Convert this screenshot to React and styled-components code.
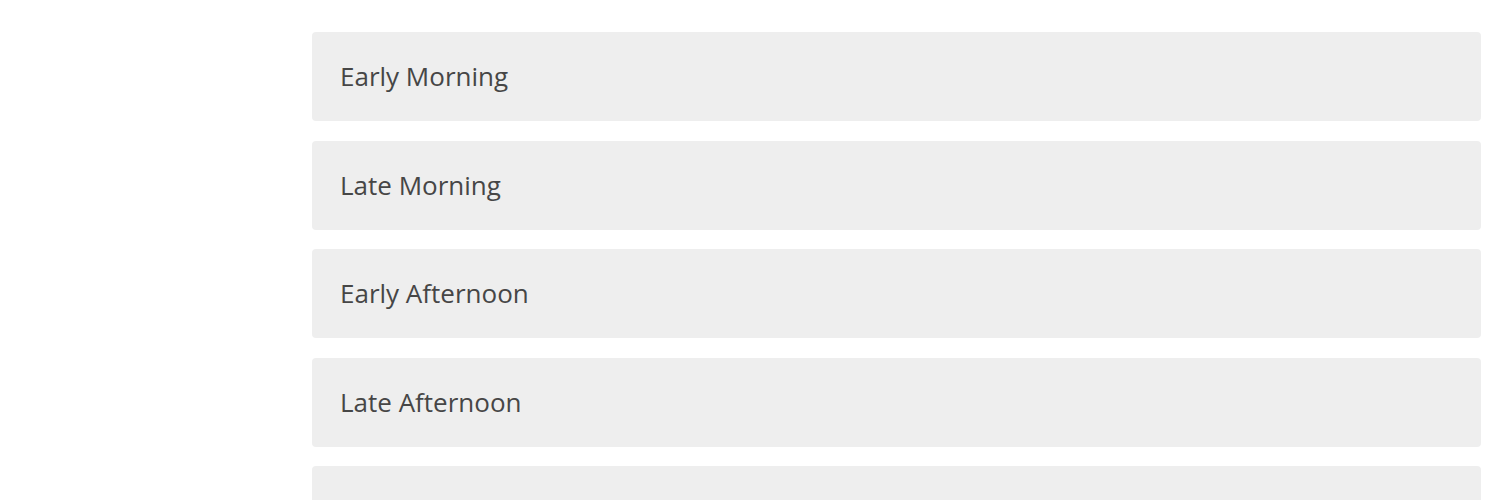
import React from "react";
import styled, { createGlobalStyle } from "styled-components";

const Global = createGlobalStyle`
  html, body { margin: 0; padding: 0; background: #ffffff; }
  body { font-family: "Open Sans", "Liberation Sans", sans-serif; }
`;

const Page = styled.div`
  display: grid;
  grid-template-columns: 312px 1fr;
  padding-right: 19px;
  height: 500px;
  overflow: hidden;
`;

const Side = styled.aside``;

const List = styled.div`
  display: flex;
  flex-direction: column;
  gap: 19.6px;
  padding-top: 32px;
`;

const Item = styled.button`
  display: flex;
  align-items: center;
  height: 89px;
  flex-shrink: 0;
  padding: 0 28px 1px;
  border: none;
  border-radius: 4px;
  background: #eeeeee;
  color: #464646;
  font-family: "Open Sans", "Liberation Sans", sans-serif;
  font-size: 26px;
  font-weight: 400;
  text-align: left;
  cursor: pointer;
`;

const slots = ["Early Morning", "Late Morning", "Early Afternoon", "Late Afternoon", "Early Evening"];

export default function App() {
  return (
    <>
      <Global />
      <Page>
        <Side />
        <List>
          {slots.map((s) => (
            <Item key={s}>{s}</Item>
          ))}
        </List>
      </Page>
    </>
  );
}
